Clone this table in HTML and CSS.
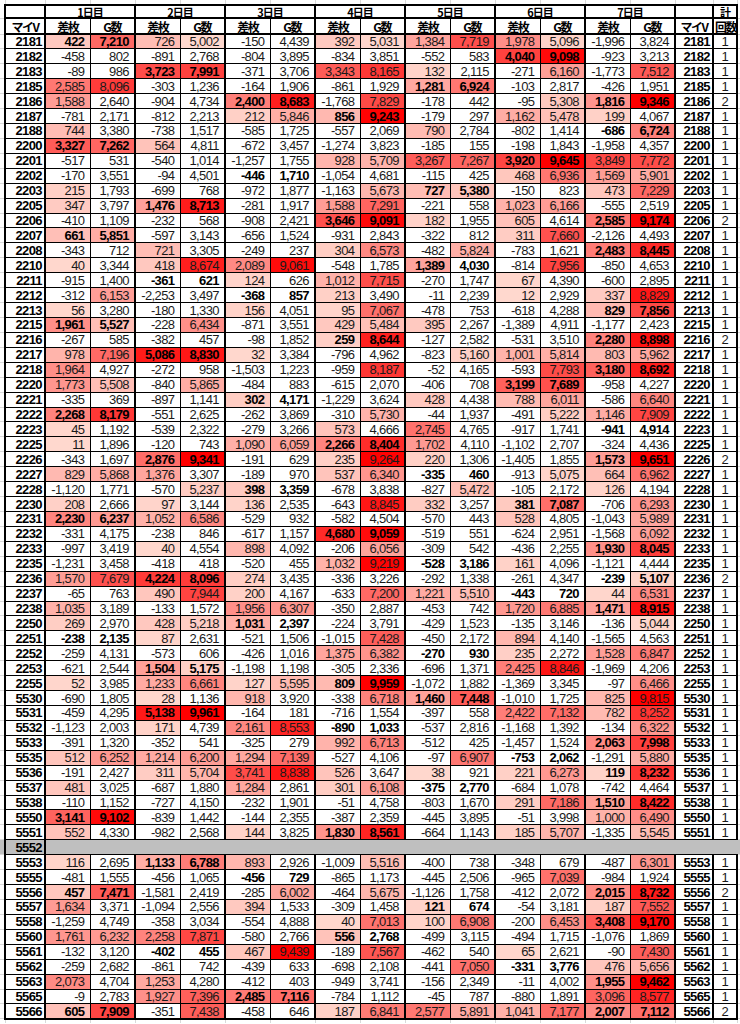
FILE: index.html
```html
<!DOCTYPE html>
<html lang="ja">
<head>
<meta charset="utf-8">
<title>マイV 差枚・G数</title>
<link rel="stylesheet" href="styles.css">
</head>
<body>
<table class="sheet">
  <colgroup>
    <col class="c-margin">
    <col class="c-id">
    <col class="c-val"><col class="c-val">
    <col class="c-val"><col class="c-val">
    <col class="c-val"><col class="c-val">
    <col class="c-val"><col class="c-val">
    <col class="c-val"><col class="c-val">
    <col class="c-val"><col class="c-val">
    <col class="c-val"><col class="c-val">
    <col class="c-id2">
    <col class="c-cnt">
    <col class="c-margin-r">
  </colgroup>
  <thead>
    <tr class="r-top">
      <td class="mt"></td><td class="mt"></td><td class="mt"></td><td class="mt"></td><td class="mt"></td><td class="mt"></td><td class="mt"></td><td class="mt"></td><td class="mt"></td><td class="mt"></td><td class="mt"></td><td class="mt"></td><td class="mt"></td><td class="mt"></td><td class="mt"></td><td class="mt"></td><td class="mt"></td><td class="mt"></td><td class="mt"></td>
    </tr>
    <tr class="r-h1">
      <td class="ml"></td>
      <th class="hd gs"></th>
      <th class="hd day gs" colspan="2">1日目</th>
      <th class="hd day gs" colspan="2">2日目</th>
      <th class="hd day gs" colspan="2">3日目</th>
      <th class="hd day gs" colspan="2">4日目</th>
      <th class="hd day gs" colspan="2">5日目</th>
      <th class="hd day gs" colspan="2">6日目</th>
      <th class="hd day gs" colspan="2">7日目</th>
      <th class="hd gs"></th>
      <th class="hd day gs end">計</th>
      <td class="mr"></td>
    </tr>
    <tr class="r-h2">
      <td class="ml"></td>
      <th class="hd gs">マイV</th>
      <th class="hd gs">差枚</th><th class="hd">G数</th>
      <th class="hd gs">差枚</th><th class="hd">G数</th>
      <th class="hd gs">差枚</th><th class="hd">G数</th>
      <th class="hd gs">差枚</th><th class="hd">G数</th>
      <th class="hd gs">差枚</th><th class="hd">G数</th>
      <th class="hd gs">差枚</th><th class="hd">G数</th>
      <th class="hd gs">差枚</th><th class="hd">G数</th>
      <th class="hd gs">マイV</th>
      <th class="hd gs end cnt-h">回数</th>
      <td class="mr"></td>
    </tr>
  </thead>
  <tbody id="rows"></tbody>
  <tfoot>
    <tr class="r-bot">
      <td class="mb"></td><td class="mb"></td><td class="mb"></td><td class="mb"></td><td class="mb"></td><td class="mb"></td><td class="mb"></td><td class="mb"></td><td class="mb"></td><td class="mb"></td><td class="mb"></td><td class="mb"></td><td class="mb"></td><td class="mb"></td><td class="mb"></td><td class="mb"></td><td class="mb"></td><td class="mb"></td><td class="mb"></td>
    </tr>
  </tfoot>
</table>
<script src="script.js"></script>
</body>
</html>
```

FILE: styles.css
```css
html, body {
  margin: 0;
  padding: 0;
  background: #ffffff;
}

.sheet {
  border-collapse: collapse;
  table-layout: fixed;
  width: 740px;
  font-family: "Liberation Sans", Arial, sans-serif;
  font-size: 13px;
  color: #1a1a1a;
}

.c-margin { width: 5px; }
.c-id { width: 40px; }
.c-val { width: 45px; }
.c-id2 { width: 38px; }
.c-cnt { width: 24px; }
.c-margin-r { width: 3px; }

.sheet td,
.sheet th {
  padding: 0;
  overflow: hidden;
  white-space: nowrap;
}

/* spreadsheet gridlines outside the table */
.mt { border: 0; border-right: 1px solid #d9d9d9; }
.mb { border: 0; border-right: 1px solid #d9d9d9; }
.ml, .mr { border: 0; border-bottom: 1px solid #d9d9d9; }

.r-top { height: 5px; }
.r-h1 { height: 13px; }
.r-h2 { height: 16px; }
.r-d { height: 14.93px; }
.r-bot { height: 4.6px; }

/* header */
.hd {
  border: 1px solid #000;
  border-top-width: 2px;
  border-bottom-width: 2px;
  font-family: "Noto Sans CJK JP", "Liberation Sans", sans-serif;
  font-weight: 700;
  font-size: 12px;
  line-height: 13px;
  letter-spacing: -1.4px;
  text-align: center;
  color: #000;
  background: #fff;
}
.sheet .day {
  font-size: 11px;
  line-height: 10px;
  letter-spacing: -1px;
  overflow: visible;
}
.cnt-h { text-align: left; padding-left: 1px !important; }

.gs { border-left-width: 2px !important; }
.end { border-right-width: 2px !important; }

/* data cells */
.v, .id, .n, .fill {
  border: 1px solid #000;
  line-height: 13px;
  background: #fff;
}
.v {
  text-align: right;
  padding-right: 5px !important;
  letter-spacing: -0.6px;
}
.v.b { font-weight: 700; color: #000; }

.id {
  text-align: right;
  padding-right: 2px !important;
  font-weight: 700;
  color: #000;
  letter-spacing: -0.6px;
}
.n {
  text-align: center;
  border-right-width: 2px;
}

.r-last .v,
.r-last .id,
.r-last .n { border-bottom-width: 2px; }

/* blank (gray) row */
.r-gray .ml,
.r-gray .mr,
.r-gray .id,
.r-gray .fill { background: #bfbfbf; }
.r-gray .fill { border-right: 0; }
```

FILE: script.js
```js
var DATA = [
"2181 422 7210* 726 5002 -150 4439 392 5031 1384 7719 1978 5096 -1996 3824 1",
"2182 -458 802 -891 2768 -804 3895 -834 3851 -552 583 4040 9098* -923 3213 1",
"2183 -89 986 3723 7991* -371 3706 3343 8165 132 2115 -271 6160 -1773 7512 1",
"2185 2585 8096 -303 1236 -164 1906 -861 1929 1281 6924* -103 2817 -426 1951 1",
"2186 1588 2640 -904 4734 2400 8683* -1768 7829 -178 442 -95 5308 1816 9346* 2",
"2187 -781 2171 -812 2213 212 5846 856 9243* -179 297 1162 5478 199 4067 1",
"2188 744 3380 -738 1517 -585 1725 -557 2069 790 2784 -802 1414 -686 6724* 1",
"2200 3327 7262* 564 4811 -672 3457 -1274 3823 -185 155 -198 1843 -1958 4357 1",
"2201 -517 531 -540 1014 -1257 1755 928 5709 3267 7267 3920 9645* 3849 7772 1",
"2202 -170 3551 -94 4501 -446 1710* -1054 4681 -115 425 468 6936 1569 5901 1",
"2203 215 1793 -699 768 -972 1877 -1163 5673 727 5380* -150 823 473 7229 1",
"2205 347 3797 1476 8713* -281 1917 1588 7291 -221 558 1023 6166 -555 2519 1",
"2206 -410 1109 -232 568 -908 2421 3646 9091* 182 1955 605 4614 2585 9174* 2",
"2207 661 5851* -597 3143 -656 1524 -931 2843 -322 812 311 7660 -2126 4493 1",
"2208 -343 712 721 3305 -249 237 304 6573 -482 5824 -783 1621 2483 8445* 1",
"2210 40 3344 418 8674 2089 9061 -548 1785 1389 4030* -814 7956 -850 4653 1",
"2211 -915 1400 -361 621* 124 626 1012 7715 -270 1747 67 4390 -600 2895 1",
"2212 -312 6153 -2253 3497 -368 857* 213 3490 -11 2239 12 2929 337 8829 1",
"2213 56 3280 -180 1330 156 4051 95 7067 -478 753 -618 4288 829 7856* 1",
"2215 1961 5527* -228 6434 -871 3551 429 5484 395 2267 -1389 4911 -1177 2423 1",
"2216 -267 585 -382 457 -98 1852 259 8644* -127 2582 -531 3510 2280 8898* 2",
"2217 978 7196 5086 8830* 32 3384 -796 4962 -823 5160 1001 5814 803 5962 1",
"2218 1964 4927 -272 958 -1503 1223 -959 8187 -52 4165 -593 7793 3180 8692* 1",
"2220 1773 5508 -840 5865 -484 883 -615 2070 -406 708 3199 7689* -958 4227 1",
"2221 -335 369 -897 1141 302 4171* -1229 3624 428 4438 788 6011 -586 6640 1",
"2222 2268 8179* -551 2625 -262 3869 -310 5730 -44 1937 -491 5222 1146 7909 1",
"2223 45 1192 -539 2322 -279 3266 573 4666 2745 4765 -917 1741 -941 4914* 1",
"2225 11 1896 -120 743 1090 6059 2266 8404* 1702 4110 -1102 2707 -324 4436 1",
"2226 -343 1697 2876 9341* -191 629 235 9264 220 1306 -1405 1855 1573 9651* 2",
"2227 829 5868 1376 3307 -189 970 537 6340 -335 460* -913 5075 664 6962 1",
"2228 -1120 1771 -570 5237 398 3359* -678 3838 -827 5472 -105 2172 126 4194 1",
"2230 208 2666 97 3144 136 2535 -643 8845 332 3257 381 7087* -706 6293 1",
"2231 2230 6237* 1052 6586 -529 932 -582 4504 -570 443 528 4805 -1043 5989 1",
"2232 -331 4175 -238 846 -617 1157 4680 9059* -519 551 -624 2951 -1568 6092 1",
"2233 -997 3419 40 4554 898 4092 -206 6056 -309 542 -436 2255 1930 8045* 1",
"2235 -1231 3458 -418 418 -520 455 1032 9219 -528 3186* 161 4096 -1121 4444 1",
"2236 1570 7679 4224 8096* 274 3435 -336 3226 -292 1338 -261 4347 -239 5107* 2",
"2237 -65 763 490 7944 200 4167 -633 7200 1221 5510 -443 720* 44 6531 1",
"2238 1035 3189 -133 1572 1956 6307 -350 2887 -453 742 1720 6885 1471 8915* 1",
"2250 269 2970 428 5218 1031 2397* -224 3791 -429 1523 -135 3146 -136 5044 1",
"2251 -238 2135* 87 2631 -521 1506 -1015 7428 -450 2172 894 4140 -1565 4563 1",
"2252 -259 4131 -573 606 -426 1016 1375 6382 -270 930* 235 2272 1528 6847 1",
"2253 -621 2544 1504 5175* -1198 1198 -305 2336 -696 1371 2425 8846 -1969 4206 1",
"2255 52 3985 1233 6661 127 5595 809 9959* -1072 1882 -1369 3345 -97 6466 1",
"5530 -690 1805 28 1136 918 3920 -338 6718 1460 7448* -1010 1725 825 9815 1",
"5531 -459 4295 5138 9961* -164 181 -716 1554 -397 558 2422 7132 782 8252 1",
"5532 -1123 2003 171 4739 2161 8553 -890 1033* -537 2816 -1168 1392 -134 6322 1",
"5533 -391 1320 -352 541 -325 279 992 6713 -512 425 -1457 1524 2063 7998* 1",
"5535 512 6252 1214 6200 1294 7139 -527 4106 -97 6907 -753 2062* -1291 5880 1",
"5536 -191 2427 311 5704 3741 8838 526 3647 38 921 221 6273 119 8232* 1",
"5537 481 3025 -687 1880 1284 2861 301 6108 -375 2770* -684 1078 -742 4464 1",
"5538 -110 1152 -727 4150 -232 1901 -51 4758 -803 1670 291 7186 1510 8422* 1",
"5550 3141 9102* -839 1442 -144 2355 -387 2359 -445 3895 -51 3998 1000 6490 1",
"5551 552 4330 -982 2568 144 3825 1830 8561* -664 1143 185 5707 -1335 5545 1",
"5552",
"5553 116 2695 1133 6788* 893 2926 -1009 5516 -400 738 -348 679 -487 6301 1",
"5555 -481 1555 -456 1065 -456 729* -865 1173 -445 2506 -965 7039 -984 1924 1",
"5556 457 7471* -1581 2419 -285 6002 -464 5675 -1126 1758 -412 2072 2015 8732* 2",
"5557 1634 3371 -1094 2556 394 1533 -309 1458 121 674* -54 3181 187 7552 1",
"5558 -1259 4749 -358 3034 -554 4888 40 7013 100 6908 -200 6453 3408 9170* 1",
"5560 1761 6232 2258 7871 -580 2766 556 2768* -499 3115 -494 1715 -1076 1869 1",
"5561 -132 3120 -402 455* 467 9439 -189 7567 -462 540 65 2621 -90 7430 1",
"5562 -259 2682 -861 742 -439 633 -698 2108 -441 7050 -331 3776* 476 5656 1",
"5563 2073 4704 1253 4280 -412 403 -949 3741 -156 2349 -11 4002 1955 9462* 1",
"5565 -9 2783 1927 7396 2485 7116* -784 1112 -45 787 -880 1891 3096 8577 1",
"5566 605 7909* -351 7438 -458 646 187 6841 2577 5891 1041 7177 2007 7112* 2"
];

function fmt(v) {
  var s = String(Math.abs(v)).replace(/\B(?=(\d{3})+(?!\d))/g, ",");
  return (v < 0 ? "-" : "") + s;
}

function shade(t) {
  if (t < 0) t = 0;
  if (t > 1) t = 1;
  var g = Math.round(216 * (1 - t));
  var b = Math.round(206 * (1 - t));
  return "rgb(255," + g + "," + b + ")";
}

function diffColor(v) {
  if (v <= 0) return null;
  return shade(v / 5800);
}

function gColor(v) {
  if (v < 5000) return null;
  return shade((v - 5000) / 4300);
}

function cell(tr, cls, text, bg) {
  var td = document.createElement("td");
  td.className = cls;
  if (text !== undefined && text !== null) td.textContent = text;
  if (bg) td.style.backgroundColor = bg;
  tr.appendChild(td);
  return td;
}

var tbody = document.getElementById("rows");

DATA.forEach(function (line, idx) {
  var p = line.split(" ");
  var tr = document.createElement("tr");
  tr.className = "r-d" + (idx === DATA.length - 1 ? " r-last" : "");
  cell(tr, "ml");
  if (p.length === 1) {
    tr.className += " r-gray";
    cell(tr, "id gs", p[0]);
    var f = cell(tr, "fill gs");
    f.colSpan = 16;
  } else {
    cell(tr, "id gs", p[0]);
    for (var k = 0; k < 7; k++) {
      var d = parseInt(p[1 + 2 * k], 10);
      var gs = p[2 + 2 * k];
      var bold = gs.charAt(gs.length - 1) === "*";
      var g = parseInt(gs, 10);
      var extra = bold ? " b" : "";
      cell(tr, "v gs" + extra, fmt(d), diffColor(d));
      cell(tr, "v" + extra, fmt(g), gColor(g));
    }
    cell(tr, "id gs", p[0]);
    cell(tr, "n gs", p[15]);
  }
  cell(tr, "mr");
  tbody.appendChild(tr);
});
```
